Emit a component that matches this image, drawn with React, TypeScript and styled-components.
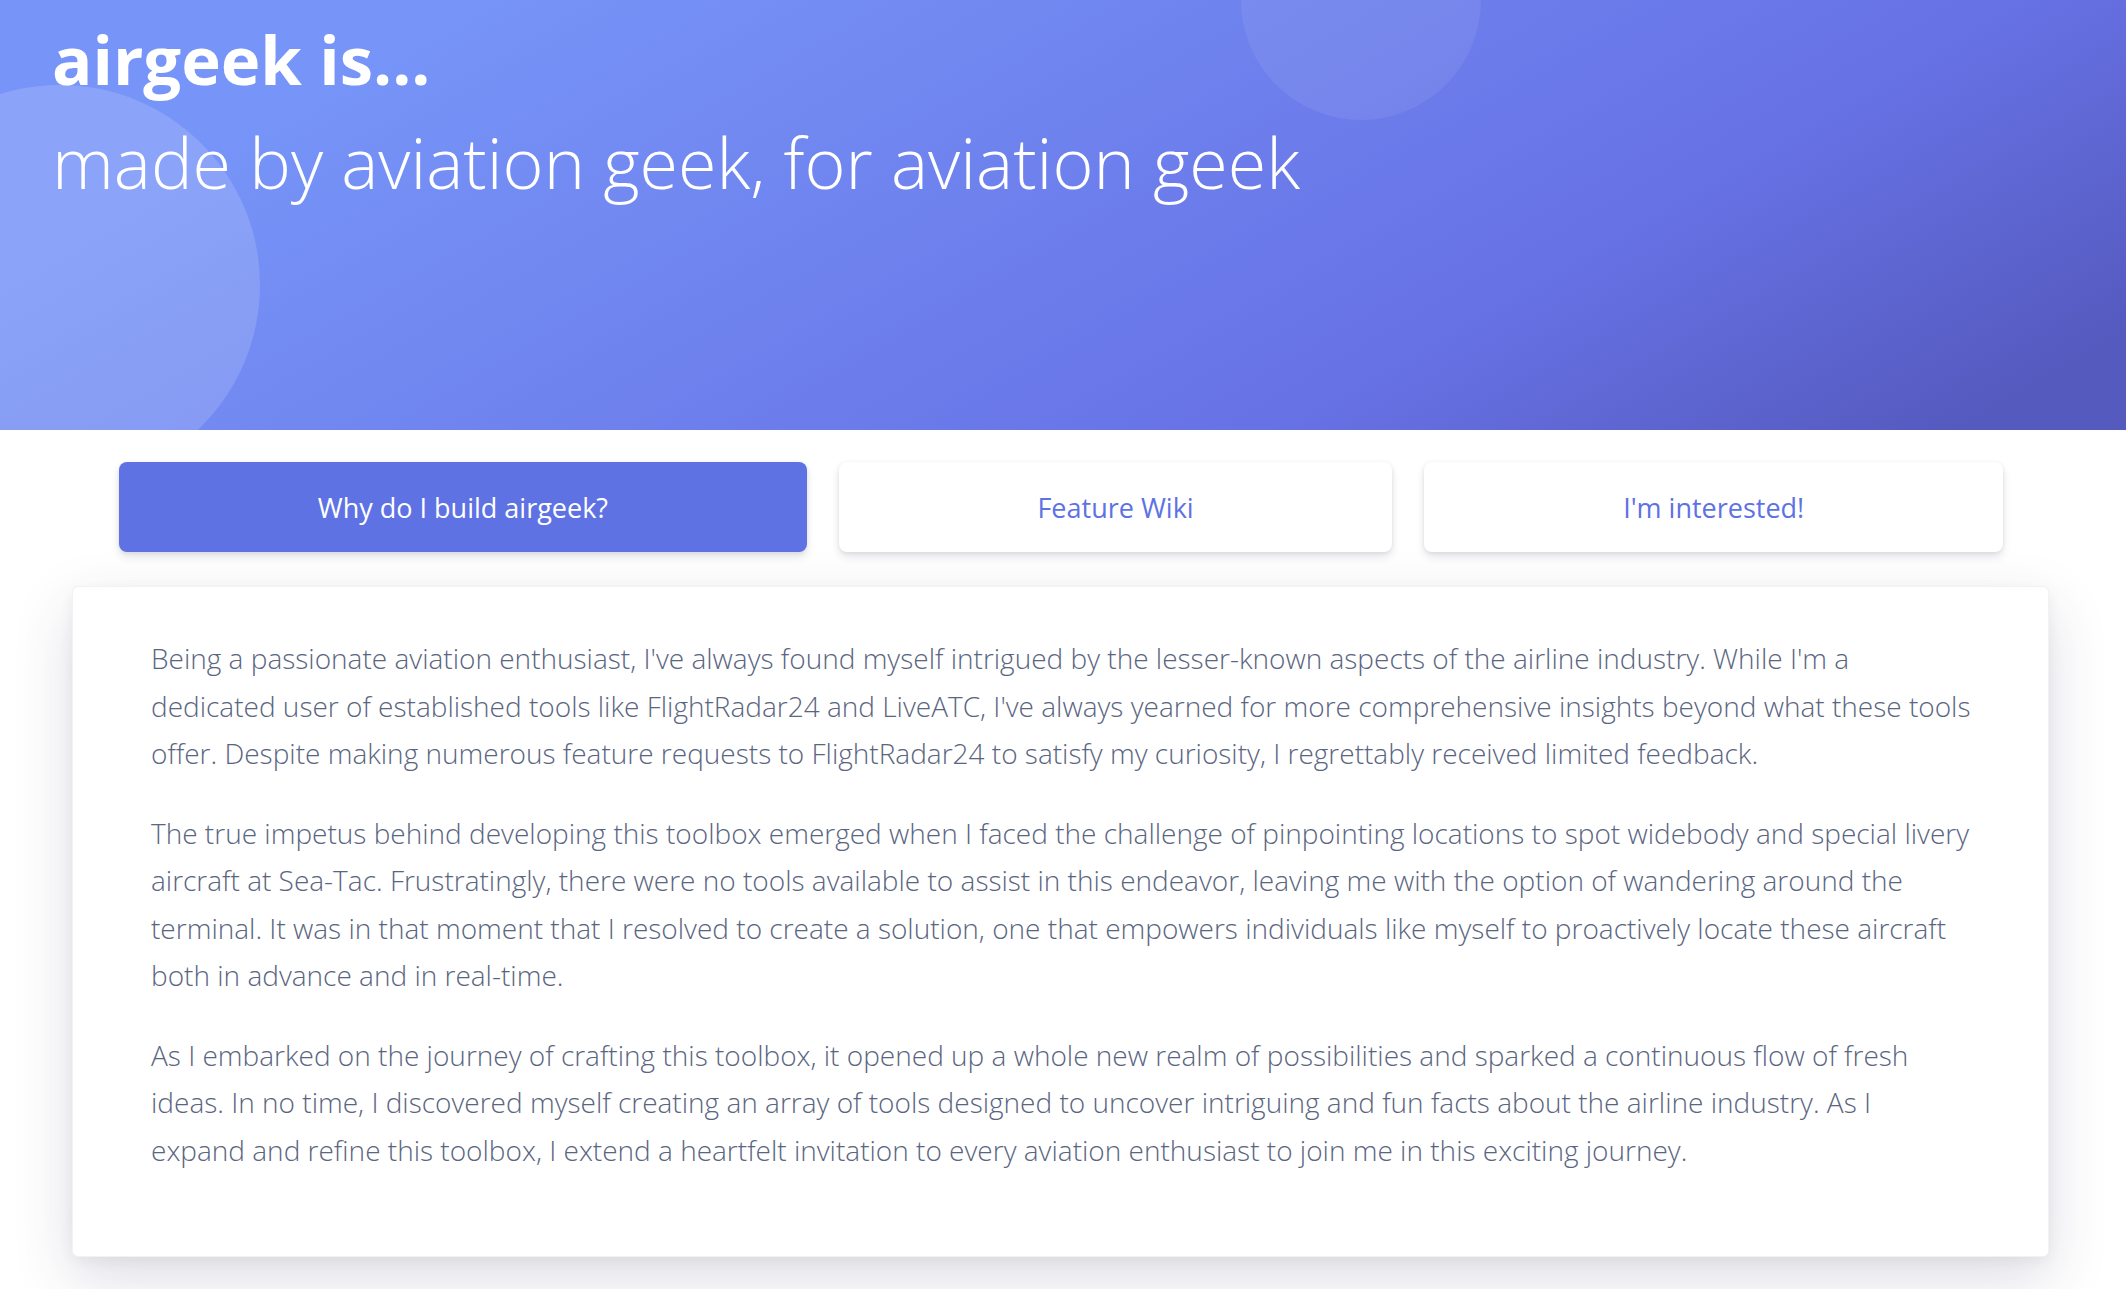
import React from "react";
import styled, { createGlobalStyle } from "styled-components";

const Global = createGlobalStyle`
  html, body { margin: 0; padding: 0; background: #ffffff; }
  body { font-family: "Open Sans", "Liberation Sans", sans-serif; -webkit-font-smoothing: antialiased; }
  * { box-sizing: border-box; }
`;

const Hero = styled.section`
  position: relative;
  overflow: hidden;
  height: 430px;
  background: linear-gradient(150deg, #7795f8 15%, #6772e5 70%, #555abf 94%);
`;

const Circle = styled.span<{ $size: number; $left: number; $top: number; $alpha: number }>`
  position: absolute;
  width: ${(p) => p.$size}px;
  height: ${(p) => p.$size}px;
  left: ${(p) => p.$left}px;
  top: ${(p) => p.$top}px;
  border-radius: 50%;
  background: rgba(255, 255, 255, ${(p) => p.$alpha});
`;

const HeroContent = styled.div`
  position: relative;
  padding: 19px 0 0 52px;
  color: #fff;
`;

const Title = styled.h1`
  margin: 0;
  font-size: 67px;
  font-weight: 700;
  line-height: 1.2;
  color: #fff;
`;

const Subtitle = styled.p`
  margin: 21px 0 0 0;
  font-size: 70px;
  font-weight: 300;
  line-height: 1.2;
  color: #fff;
`;

const Main = styled.main`
  padding: 32px 77px 40px 72px;
`;

const Tabs = styled.nav`
  display: flex;
  gap: 32px;
  margin: 0 46px 34px 47px;
`;

const Tab = styled.button<{ $active?: boolean }>`
  flex: 1 1 auto;
  height: 90px;
  border: none;
  border-radius: 8px;
  font-family: "Open Sans", "Liberation Sans", sans-serif;
  font-size: 27px;
  font-weight: 500;
  cursor: pointer;
  color: ${(p) => (p.$active ? "#fff" : "#5e72e4")};
  background: ${(p) => (p.$active ? "#5e72e4" : "#fff")};
  box-shadow: 0 5px 9px rgba(50, 50, 93, 0.12), 0 1px 4px rgba(0, 0, 0, 0.08);
`;

const Card = styled.article`
  background: #fff;
  border: 1px solid rgba(0, 0, 0, 0.05);
  border-radius: 6px;
  box-shadow: 0 22px 60px rgba(50, 50, 93, 0.16), 0 4px 14px rgba(0, 0, 0, 0.05);
  padding: 48px 77px 82px 78px;
`;

const Para = styled.p`
  margin: 0 0 32px 0;
  font-size: 28px;
  font-weight: 300;
  line-height: 47.5px;
  color: #5a6580;
  &:last-child { margin-bottom: 0; }
`;

export default function App() {
  return (
    <>
      <Global />
      <Hero>
        <Circle $size={400} $left={-140} $top={85} $alpha={0.15} />
        <Circle $size={240} $left={1241} $top={-120} $alpha={0.07} />
        <HeroContent>
          <Title>airgeek is...</Title>
          <Subtitle>made by aviation geek, for aviation geek</Subtitle>
        </HeroContent>
      </Hero>
      <Main>
        <Tabs>
          <Tab $active>Why do I build airgeek?</Tab>
          <Tab>Feature Wiki</Tab>
          <Tab>I'm interested!</Tab>
        </Tabs>
        <Card>
          <Para>
            Being a passionate aviation enthusiast, I've always found myself intrigued by the lesser-known aspects of the airline industry. While I'm a dedicated user of established tools like FlightRadar24 and LiveATC, I've always yearned for more comprehensive insights beyond what these tools offer. Despite making numerous feature requests to FlightRadar24 to satisfy my curiosity, I regrettably received limited feedback.
          </Para>
          <Para>
            The true impetus behind developing this toolbox emerged when I faced the challenge of pinpointing locations to spot widebody and special livery aircraft at Sea-Tac. Frustratingly, there were no tools available to assist in this endeavor, leaving me with the option of wandering around the terminal. It was in that moment that I resolved to create a solution, one that empowers individuals like myself to proactively locate these aircraft both in advance and in real-time.
          </Para>
          <Para>
            As I embarked on the journey of crafting this toolbox, it opened up a whole new realm of possibilities and sparked a continuous flow of fresh ideas. In no time, I discovered myself creating an array of tools designed to uncover intriguing and fun facts about the airline industry. As I expand and refine this toolbox, I extend a heartfelt invitation to every aviation enthusiast to join me in this exciting journey.
          </Para>
        </Card>
      </Main>
    </>
  );
}
